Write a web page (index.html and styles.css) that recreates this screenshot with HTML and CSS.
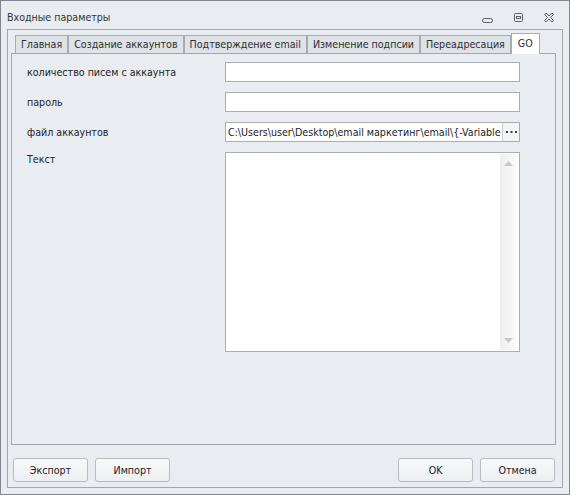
FILE: index.html
```html
<!DOCTYPE html>
<html lang="ru">
<head>
<meta charset="utf-8">
<title>Входные параметры</title>
<link rel="stylesheet" href="styles.css">
</head>
<body>
<div class="window">
  <div class="titlebar">
    <span class="title">Входные параметры</span>
    <div class="controls">
      <svg class="ctl ctl-min" width="30" height="27" viewBox="0 0 30 27">
        <rect x="8.5" y="17.5" width="10" height="4" rx="2" fill="none" stroke="#5b6067"/>
      </svg>
      <svg class="ctl ctl-max" width="30" height="27" viewBox="0 0 30 27">
        <rect x="10.5" y="12.5" width="8" height="8" rx="1" fill="none" stroke="#5b6067"/>
        <rect x="12.5" y="15.5" width="4" height="2" fill="none" stroke="#5b6067"/>
      </svg>
      <svg class="ctl ctl-close" width="30" height="27" viewBox="0 0 30 27">
        <polygon points="10.5,13.5 12,12 15,15 18,12 19.5,13.5 16.5,16.5 19.5,19.5 18,21 15,18 12,21 10.5,19.5 13.5,16.5" fill="none" stroke="#5b6067" stroke-linejoin="round"/>
      </svg>
    </div>
  </div>

  <div class="frame">
    <div class="tabs">
      <div class="tab">Главная</div>
      <div class="tab">Создание аккаунтов</div>
      <div class="tab">Подтверждение email</div>
      <div class="tab">Изменение подпсии</div>
      <div class="tab">Переадресация</div>
      <div class="tab tab-active">GO</div>
    </div>

    <div class="panel">
      <div class="form">
        <label class="label">количество писем с аккаунта</label>
        <div class="field"></div>

        <label class="label">пароль</label>
        <div class="field"></div>

        <label class="label">файл аккаунтов</label>
        <div class="field field-file">
          <span class="file-path">C:\Users\user\Desktop\email маркетинг\email\{-Variable</span>
          <span class="file-btn">
            <svg width="11" height="3" viewBox="0 0 11 3">
              <rect x="0" y="0" width="2" height="2" fill="#3c4046"/>
              <rect x="4.5" y="0" width="2" height="2" fill="#3c4046"/>
              <rect x="9" y="0" width="2" height="2" fill="#3c4046"/>
            </svg>
          </span>
        </div>

        <label class="label label-top">Текст</label>
        <div class="memo">
          <div class="memo-scroll">
            <svg width="9" height="5" viewBox="0 0 9 5"><polygon points="0,5 9,5 4.5,0" fill="#c8c9cb"/></svg>
            <svg width="9" height="5" viewBox="0 0 9 5"><polygon points="0,0 9,0 4.5,5" fill="#c8c9cb"/></svg>
          </div>
        </div>
      </div>
    </div>

    <div class="buttons">
      <div class="btn-group">
        <button class="btn">Экспорт</button>
        <button class="btn">Импорт</button>
      </div>
      <div class="btn-group">
        <button class="btn">OK</button>
        <button class="btn">Отмена</button>
      </div>
    </div>
  </div>
</div>
</body>
</html>
```

FILE: styles.css
```css
* {
  box-sizing: border-box;
}

html, body {
  margin: 0;
  padding: 0;
  background: #e9ecf0;
}

body {
  font-family: "DejaVu Sans Condensed", "DejaVu Sans", sans-serif;
  font-size: 10.6px;
  color: #1f2226;
}

.window {
  width: 570px;
  height: 495px;
  border: 1px solid #80868d;
  background: #e9ecf0;
  display: flex;
  flex-direction: column;
}

/* title bar */
.titlebar {
  height: 28px;
  flex: none;
  display: flex;
  align-items: flex-start;
  padding-left: 6px;
  padding-right: 5px;
}

.title {
  padding-top: 9px;
  line-height: 14px;
  color: #30343a;
}

.controls {
  margin-left: auto;
  display: flex;
}

.ctl {
  display: block;
}

/* inner frame */
.frame {
  flex: 1;
  margin: 0 6px 6px 6px;
  border: 1px solid #a2a7ad;
  display: flex;
  flex-direction: column;
}

/* tab strip */
.tabs {
  flex: none;
  display: flex;
  align-items: flex-end;
  height: 23px;
  padding-left: 7px;
  position: relative;
  z-index: 1;
}

.tab {
  height: 18px;
  padding: 0 5px;
  border: 1px solid #a6abb1;
  border-bottom: none;
  background: #dfe2e7;
  line-height: 16px;
  color: #2a2e33;
  white-space: nowrap;
}

.tab-active {
  height: 21px;
  margin-bottom: -1px;
  background: #ffffff;
  line-height: 19px;
  padding: 0 6px;
}

/* tab page */
.panel {
  flex: none;
  height: 392px;
  margin: 0 6px 0 3px;
  border: 1px solid #a2a7ad;
  padding: 8px 0 0 15px;
}

.form {
  display: grid;
  grid-template-columns: 198px 295px;
  grid-auto-rows: 20px;
  row-gap: 10px;
}

.label {
  line-height: 20px;
  color: #202327;
}

.label-top {
  line-height: 14px;
}

.field {
  background: #ffffff;
  border: 1px solid #a9adb4;
}

.field-file {
  display: flex;
  overflow: hidden;
}

.file-path {
  flex: 1;
  overflow: hidden;
  white-space: nowrap;
  padding-left: 2px;
  line-height: 18px;
  color: #1a1c1f;
}

.file-btn {
  flex: none;
  width: 17px;
  border-left: 1px solid #c9cdd2;
  background: #f3f4f6;
  display: flex;
  align-items: center;
  justify-content: center;
}

.file-btn svg {
  display: block;
}

.memo {
  grid-row: span 7;
  height: 200px;
  background: #ffffff;
  border: 1px solid #a9adb4;
  padding: 1px 2px 1px 0;
  display: flex;
  justify-content: flex-end;
}

.memo-scroll {
  width: 17px;
  height: 100%;
  background: linear-gradient(to right, #eeeeef, #fbfbfb);
  display: flex;
  flex-direction: column;
  justify-content: space-between;
  align-items: center;
  padding: 7px 0;
}

.memo-scroll svg {
  display: block;
}

/* dialog buttons */
.buttons {
  flex: none;
  display: flex;
  justify-content: space-between;
  margin-top: 13px;
  padding: 0 7px 0 5px;
}

.btn-group {
  display: flex;
  gap: 7px;
}

.btn {
  width: 75px;
  height: 24px;
  margin: 0;
  border: 1px solid #b8bcc2;
  border-radius: 3px;
  background: linear-gradient(#f8f9fa, #eceef1);
  font-family: inherit;
  font-size: 10.6px;
  color: #1f2226;
  padding: 0;
}
```
